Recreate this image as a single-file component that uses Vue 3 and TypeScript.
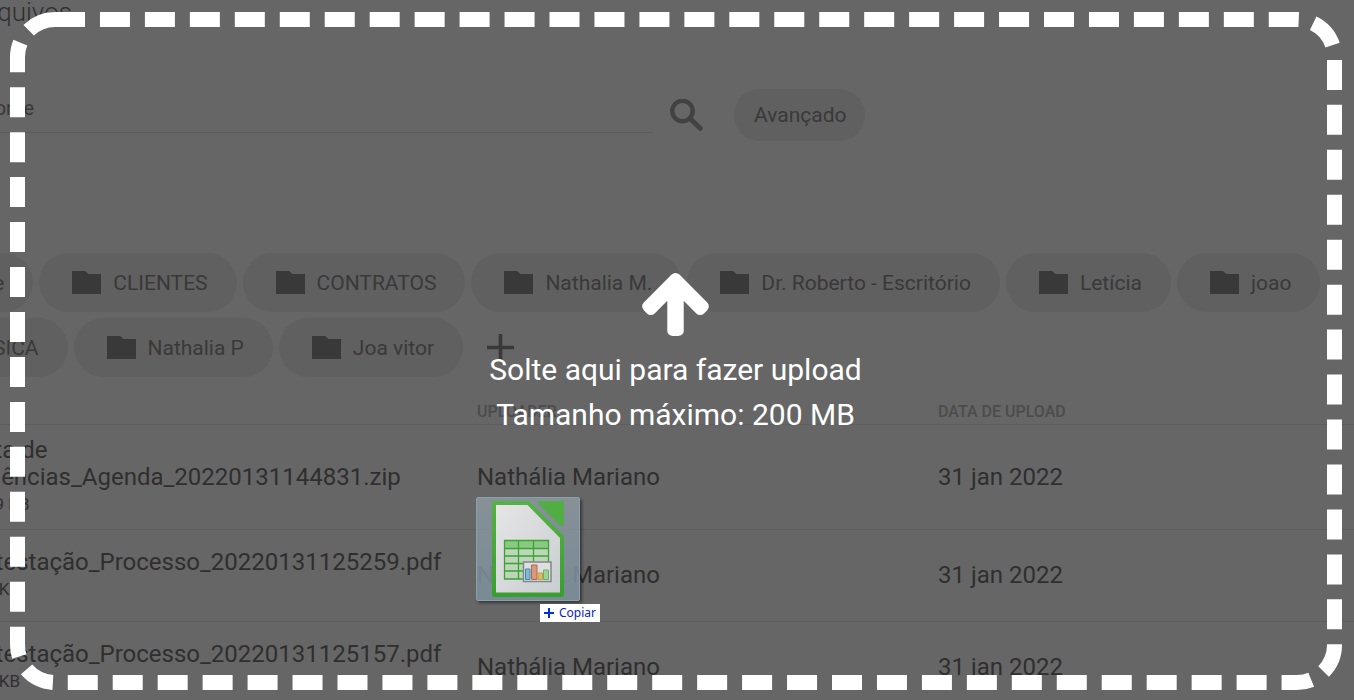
<script setup lang="ts">
interface FileRow {
  name: string
  size: string
  uploader: string
  date: string
}

const folders: string[] = [
  'Ante',
  'CLIENTES',
  'CONTRATOS',
  'Nathalia M.',
  'Dr. Roberto - Escritório',
  'Letícia',
  'joao',
  'MÚSICA',
  'Nathalia P',
  'Joa vitor',
]

const files: FileRow[] = [
  { name: 'Pauta de Audiências_Agenda_20220131144831.zip', size: '345,29 KB', uploader: 'Nathália Mariano', date: '31 jan 2022' },
  { name: 'Contestação_Processo_20220131125259.pdf', size: '263,9 KB', uploader: 'Nathália Mariano', date: '31 jan 2022' },
  { name: 'Contestação_Processo_20220131125157.pdf', size: '263,9 KB', uploader: 'Nathália Mariano', date: '31 jan 2022' },
]
</script>

<template>
  <div class="viewport">
    <main class="page">
      <h1 class="title">Meus arquivos</h1>

      <form class="search" @submit.prevent>
        <input class="search-input" type="text" placeholder="Pesquisar nome" aria-label="Pesquisar nome" />
        <button class="icon-button" type="submit" aria-label="Buscar">
          <svg class="search-icon" viewBox="0 0 33 32" aria-hidden="true">
            <circle cx="12.5" cy="12" r="10.2" fill="none" stroke="currentColor" stroke-width="4.4" />
            <path d="M20 19.5L30.2 29.3" fill="none" stroke="currentColor" stroke-width="5" stroke-linecap="round" />
          </svg>
        </button>
        <button class="advanced" type="button">Avançado</button>
      </form>

      <nav class="folders" aria-label="Pastas">
        <button v-for="folder in folders" :key="folder" class="folder" type="button">
          <svg class="folder-icon" viewBox="0 0 29 23" aria-hidden="true">
            <path d="M0 0H13L16.5 3H29V23H0Z" fill="currentColor" />
          </svg>
          <span>{{ folder }}</span>
        </button>
        <button class="add" type="button" aria-label="Nova pasta">
          <svg class="add-icon" viewBox="0 0 27 27" aria-hidden="true">
            <path d="M13.5 0V27M0 13.5H27" stroke="currentColor" stroke-width="3.6" />
          </svg>
        </button>
      </nav>

      <table class="files">
        <thead>
          <tr>
            <th class="col-name">Nome</th>
            <th class="col-uploader">UPLOADER</th>
            <th>DATA DE UPLOAD</th>
          </tr>
        </thead>
        <tbody>
          <tr v-for="file in files" :key="file.name">
            <td class="col-name">
              <div class="file-name">{{ file.name }}</div>
              <div class="file-size">{{ file.size }}</div>
            </td>
            <td>{{ file.uploader }}</td>
            <td>{{ file.date }}</td>
          </tr>
        </tbody>
      </table>
    </main>

    <section class="dropzone">
      <svg class="outline" aria-hidden="true">
        <rect class="outline-rect" x="7.5" y="7.5" rx="37.5" stroke-dasharray="30 14.955" />
      </svg>
      <svg class="arrow" viewBox="53 192 1558 1472" aria-hidden="true">
        <path
          fill="currentColor"
          d="M1611 971q0 51-37 90l-75 75q-38 38-91 38-54 0-90-38l-294-293v704q0 52-37.5 84.5t-90.5 32.5h-128q-53 0-90.5-32.5t-37.5-84.5v-704l-294 293q-36 38-90 38t-90-38l-75-75q-38-38-38-90 0-53 38-91l651-651q35-37 90-37 54 0 91 37l651 651q37 39 37 91z"
        />
      </svg>
      <p>Solte aqui para fazer upload</p>
      <p>Tamanho máximo: 200 MB</p>
    </section>

    <div class="drag-item">
      <svg class="sheet" viewBox="0 0 72 96" aria-hidden="true">
        <defs>
          <linearGradient id="paper" x1="0" y1="0" x2="1" y2="1">
            <stop offset="0" stop-color="#e9e9ea" />
            <stop offset="1" stop-color="#cdd1d3" />
          </linearGradient>
          <linearGradient id="edge" x1="0" y1="0" x2="0" y2="1">
            <stop offset="0" stop-color="#55b344" />
            <stop offset="1" stop-color="#36a02b" />
          </linearGradient>
        </defs>
        <path d="M0 2Q0 0 2 0H37L72 35V94Q72 96 70 96H2Q0 96 0 94Z" fill="url(#edge)" />
        <path d="M4 4H35.5L68 37V91.5H4Z" fill="url(#paper)" />
        <path d="M46.5 0H72V24.5H68L46.5 3Z" fill="#4eb03f" />
        <path d="M12 39.5H56.5V78H12Z" fill="#c0dabc" />
        <path d="M12 39.5H56.5V47H12Z" fill="#8bcb83" />
        <path
          d="M12.5 39.5H56.5V78H12.5ZM12.5 47.5H56.5M12.5 55H56.5M12.5 62.5H56.5M12.5 70H56.5M26.5 39.5V78M41.5 39.5V78"
          fill="none"
          stroke="#3ba331"
          stroke-width="1.3"
        />
        <path d="M31.5 61H59V80.5H31.5Z" fill="#e2e3e3" stroke="#85888b" stroke-width="1.5" />
        <path d="M33.5 68H38V78.5H33.5Z" fill="#82bbd6" stroke="#3f89b4" />
        <path d="M39.5 64H45V78.5H39.5Z" fill="#d99a80" stroke="#bc664a" />
        <path d="M46 72H50.5V78.5H46Z" fill="#e0bd63" stroke="#cba044" />
        <path d="M51.5 69H56.5V78.5H51.5Z" fill="#a1d49b" stroke="#67b566" />
      </svg>
    </div>
    <div class="drag-label">
      <svg class="plus" viewBox="0 0 10 10" aria-hidden="true">
        <path d="M5 0V10M0 5H10" stroke="#0033cc" stroke-width="2" />
      </svg>
      <span>Copiar</span>
    </div>
  </div>
</template>

<style>
body {
  margin: 0;
  background: #666;
}
</style>

<style scoped>
.viewport {
  position: relative;
  height: 100vh;
  overflow: hidden;
  background: #666;
  color: #2f2f2f;
  font-family: Roboto, "Open Sans", sans-serif;
}

.page {
  margin-left: -113px;
}

button {
  border: 0;
  padding: 0;
  background: none;
  color: #393939;
  font: inherit;
}

.title {
  margin: 0;
  padding-left: 18px;
  height: 89px;
  font-size: 26px;
  font-weight: 300;
  line-height: 24px;
}

.search {
  display: flex;
  align-items: center;
  height: 52px;
}

.search-input {
  box-sizing: border-box;
  flex: 0 1 766px;
  align-self: flex-start;
  height: 52px;
  margin-top: -8px;
  border: 0;
  border-bottom: 1px solid #5a5a5a;
  padding: 2px 0 0 3px;
  background: none;
  color: #333;
  font: 20px Roboto, sans-serif;
}

.search-input::placeholder {
  color: #393939;
  opacity: 1;
}

.icon-button {
  margin: 0 31px 0 17px;
  color: #424242;
}

.search-icon {
  display: block;
  width: 33px;
  height: 32px;
}

.advanced {
  height: 52px;
  padding: 0 19px 0 20px;
  border-radius: 26px;
  background: #606060;
  font-size: 21px;
}

.folders {
  display: flex;
  flex-wrap: wrap;
  gap: 6px;
  margin-top: 112px;
}

.folder {
  display: flex;
  align-items: center;
  gap: 12px;
  height: 59px;
  padding: 0 29px 0 33px;
  border-radius: 30px;
  background: #606060;
  font-size: 21px;
}

.folder-icon {
  width: 29px;
  height: 23px;
}

.add {
  margin-left: 18px;
}

.add-icon {
  display: block;
  width: 27px;
  height: 27px;
}

.files {
  width: 100%;
  margin-top: 23px;
  border-collapse: collapse;
  table-layout: fixed;
  font-size: 24px;
  line-height: 27px;
}

.files th {
  height: 24px;
  padding: 0;
  border-bottom: 1px solid #5e5e5e;
  color: #4c4c4c;
  font-size: 16px;
  font-weight: 500;
  line-height: 24px;
  text-align: left;
}

.files td {
  height: 67px;
  padding: 12px 0;
  border-bottom: 1px solid #5e5e5e;
}

.files .col-name {
  width: 590px;
  padding-left: 66px;
  box-sizing: border-box;
}

.files .col-uploader {
  width: 461px;
}

.file-size {
  font-size: 17px;
  line-height: 26px;
}

.dropzone {
  position: absolute;
  inset: 12px 12px 10px 10px;
  display: flex;
  flex-direction: column;
  align-items: center;
  justify-content: center;
  padding: 8px 1px 0 0;
  color: #fff;
  font-size: 30px;
  line-height: 45px;
}

.dropzone p {
  margin: 0;
}

.outline {
  position: absolute;
  inset: 0;
  width: 100%;
  height: 100%;
}

.outline-rect {
  width: calc(100% - 15px);
  height: calc(100% - 15px);
  fill: none;
  stroke: #fff;
  stroke-width: 15px;
}

.arrow {
  width: 67px;
  height: 63px;
  margin-bottom: 11px;
}

.drag-item {
  position: absolute;
  left: 476px;
  top: 497px;
  display: flex;
  align-items: center;
  justify-content: center;
  box-sizing: border-box;
  width: 104px;
  height: 104px;
  border: 1px solid #8ba0ab;
  border-radius: 2px;
  background: linear-gradient(rgba(140, 152, 160, 0.85), rgba(124, 145, 157, 0.85));
  box-shadow: 2px 2px 3px rgba(0, 0, 0, 0.45);
}

.sheet {
  width: 72px;
  height: 96px;
  opacity: 0.96;
}

.drag-label {
  position: absolute;
  left: 540px;
  top: 604px;
  display: flex;
  align-items: center;
  gap: 5px;
  height: 18px;
  padding: 0 4px;
  background: #fff;
  color: #0b23c4;
  font-family: "Noto Sans", sans-serif;
  font-size: 12px;
  line-height: 18px;
}

.plus {
  width: 10px;
  height: 10px;
}
</style>
